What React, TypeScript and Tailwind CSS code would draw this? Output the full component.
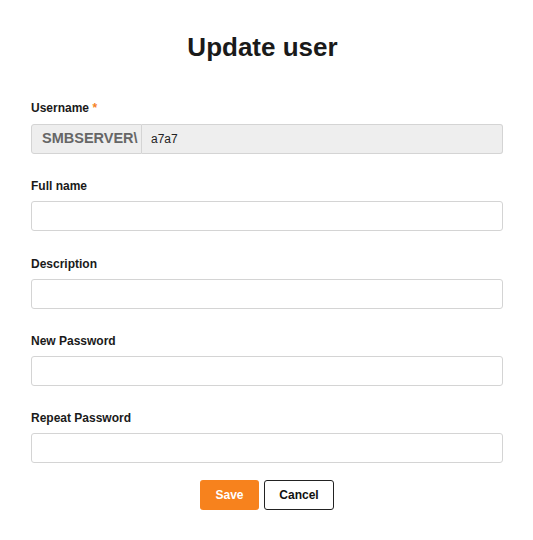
export default function App() {
  const fields = ["Full name", "Description", "New Password", "Repeat Password"];

  return (
    <div className="min-h-[540px] w-[533px] bg-white font-['Liberation_Sans',Arial,sans-serif] text-[#1a1a1a]">
      <div className="pl-[31px] pr-[30px] pt-[33px]">
        <h1 className="mr-[9px] text-center text-[26px] font-bold leading-[28px]">Update user</h1>

        <div className="mt-[39px]">
          <label className="block text-[12px] font-bold leading-[16px]">
            Username <span className="text-[#f5821f]">*</span>
          </label>
          <div className="mt-[8px] flex h-[30px]">
            <div className="flex w-[111px] items-center overflow-hidden whitespace-nowrap rounded-l-[3px] border border-[#d4d4d4] bg-[#eeeeee] pl-[10px] text-[14.5px] font-bold text-[#666]">
              SMBSERVER\
            </div>
            <input
              type="text"
              value="a7a7"
              readOnly
              className="flex-1 rounded-r-[3px] border border-l-0 border-[#d4d4d4] bg-[#eeeeee] px-[9px] text-[12px] text-[#222] outline-none"
            />
          </div>
        </div>

        {fields.map((f, i) => (
          <div key={f} className={i === 1 ? "mt-[25px]" : "mt-[24px]"}>
            <label className="block text-[12px] font-bold leading-[16px]">{f}</label>
            <input
              type={f.includes("Password") ? "password" : "text"}
              className="mt-[7px] block h-[30px] w-full rounded-[3px] border border-[#d4d4d4] bg-white px-[8px] text-[12px] outline-none"
            />
          </div>
        ))}

        <div className="mt-[17px] flex justify-center gap-[5px]">
          <button className="h-[30px] w-[59px] rounded-[3px] bg-[#f7821d] text-[12px] font-bold text-white">
            Save
          </button>
          <button className="h-[30px] w-[70px] rounded-[3px] border-[1.5px] border-[#222] bg-white text-[12px] font-bold text-[#111]">
            Cancel
          </button>
        </div>
      </div>
    </div>
  );
}
